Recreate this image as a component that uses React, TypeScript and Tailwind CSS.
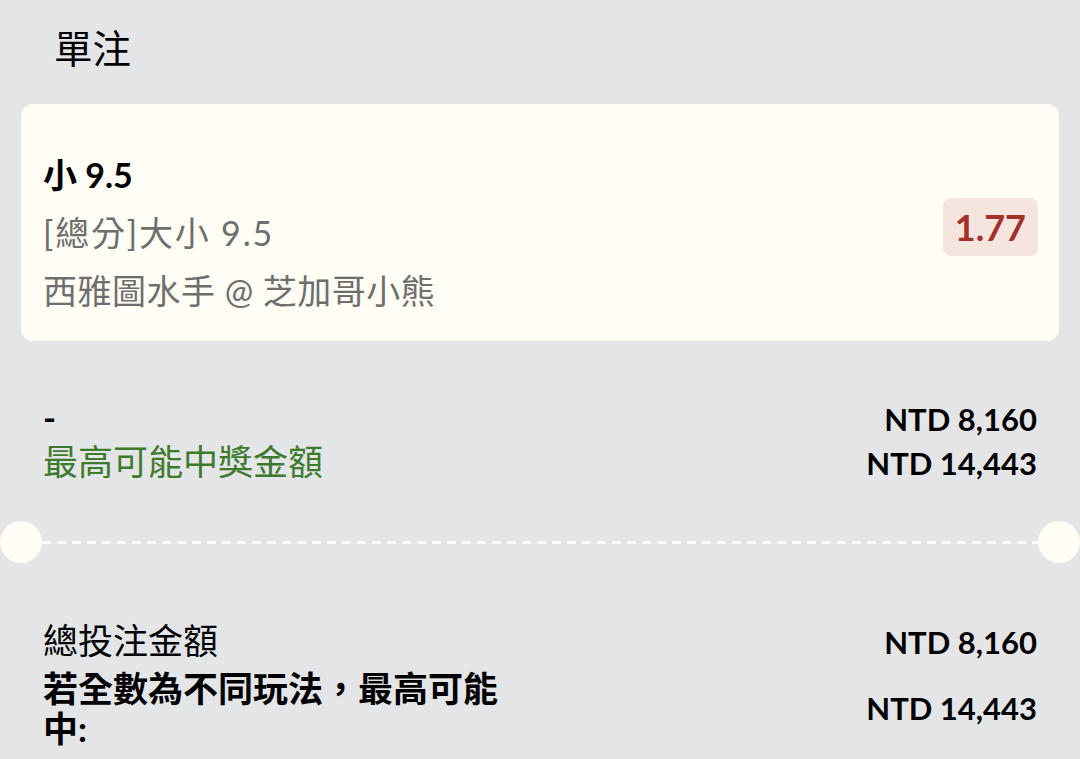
import React from 'react';

const font = "font-['Lato','Noto_Sans_CJK_TC',sans-serif]";

const Row = ({ left, right, className = '' }: { left: React.ReactNode; right: React.ReactNode; className?: string }) => (
  <div className={`flex justify-between ${className}`}>
    <div>{left}</div>
    <div className="text-right">{right}</div>
  </div>
);

export default function App() {
  return (
    <div className={`min-h-screen w-full bg-[#e4e5e7] text-black ${font}`}>
      {/* header */}
      <div className="pt-[24px] pl-[54px] text-[38.5px] leading-[48px]">單注</div>

      {/* selection card */}
      <div className="mx-[21px] mt-[32px] rounded-[12px] bg-[#fffdf4] pl-[22px] pr-[21px] pt-[42px] pb-[21px] flex items-start justify-between">
        <div className="text-[34px] leading-[58px]">
          <div className="font-bold">小 9.5</div>
          <div className="text-[#6e6e6e] tracking-[1.8px]">[總分]大小 9.5</div>
          <div className="text-[#6e6e6e] tracking-[0.5px]">西雅圖水手 @ 芝加哥小熊</div>
        </div>
        <div className="mt-[52px] rounded-[8px] bg-[#f6e5de] px-[12px] h-[58px] flex items-center text-[36px] font-bold text-[#a3302a]">
          1.77
        </div>
      </div>

      {/* potential win */}
      <div className="mt-[55px] px-[43px] text-[35px] leading-[42px]">
        <Row left={<span className="font-bold">-</span>} right={<span className="font-bold text-[31px]">NTD 8,160</span>} />
        <Row left={<span className="text-[#3d7a2c]">最高可能中獎金額</span>} right={<span className="font-bold text-[31px]">NTD 14,443</span>} />
      </div>

      {/* divider */}
      <div className="mt-[37px] flex items-center">
        <div className="h-[42px] w-[42px] shrink-0 rounded-full bg-[#fffdf4]" />
        <div className="h-[3px] flex-1 bg-[repeating-linear-gradient(to_right,#fcfbf6_0_9px,transparent_9px_15px)]" />
        <div className="h-[42px] w-[42px] shrink-0 rounded-full bg-[#fffdf4]" />
      </div>

      {/* totals */}
      <div className="mt-[56px] px-[43px] text-[35px]">
        <Row
          className="leading-[42px]"
          left={<span>總投注金額</span>}
          right={<span className="font-bold text-[31px]">NTD 8,160</span>}
        />
        <div className="mt-[5px] flex items-center justify-between">
          <div className="w-[480px] font-bold leading-[40px]">若全數為不同玩法，最高可能中:</div>
          <div className="font-bold text-[31px]">NTD 14,443</div>
        </div>
      </div>
    </div>
  );
}
